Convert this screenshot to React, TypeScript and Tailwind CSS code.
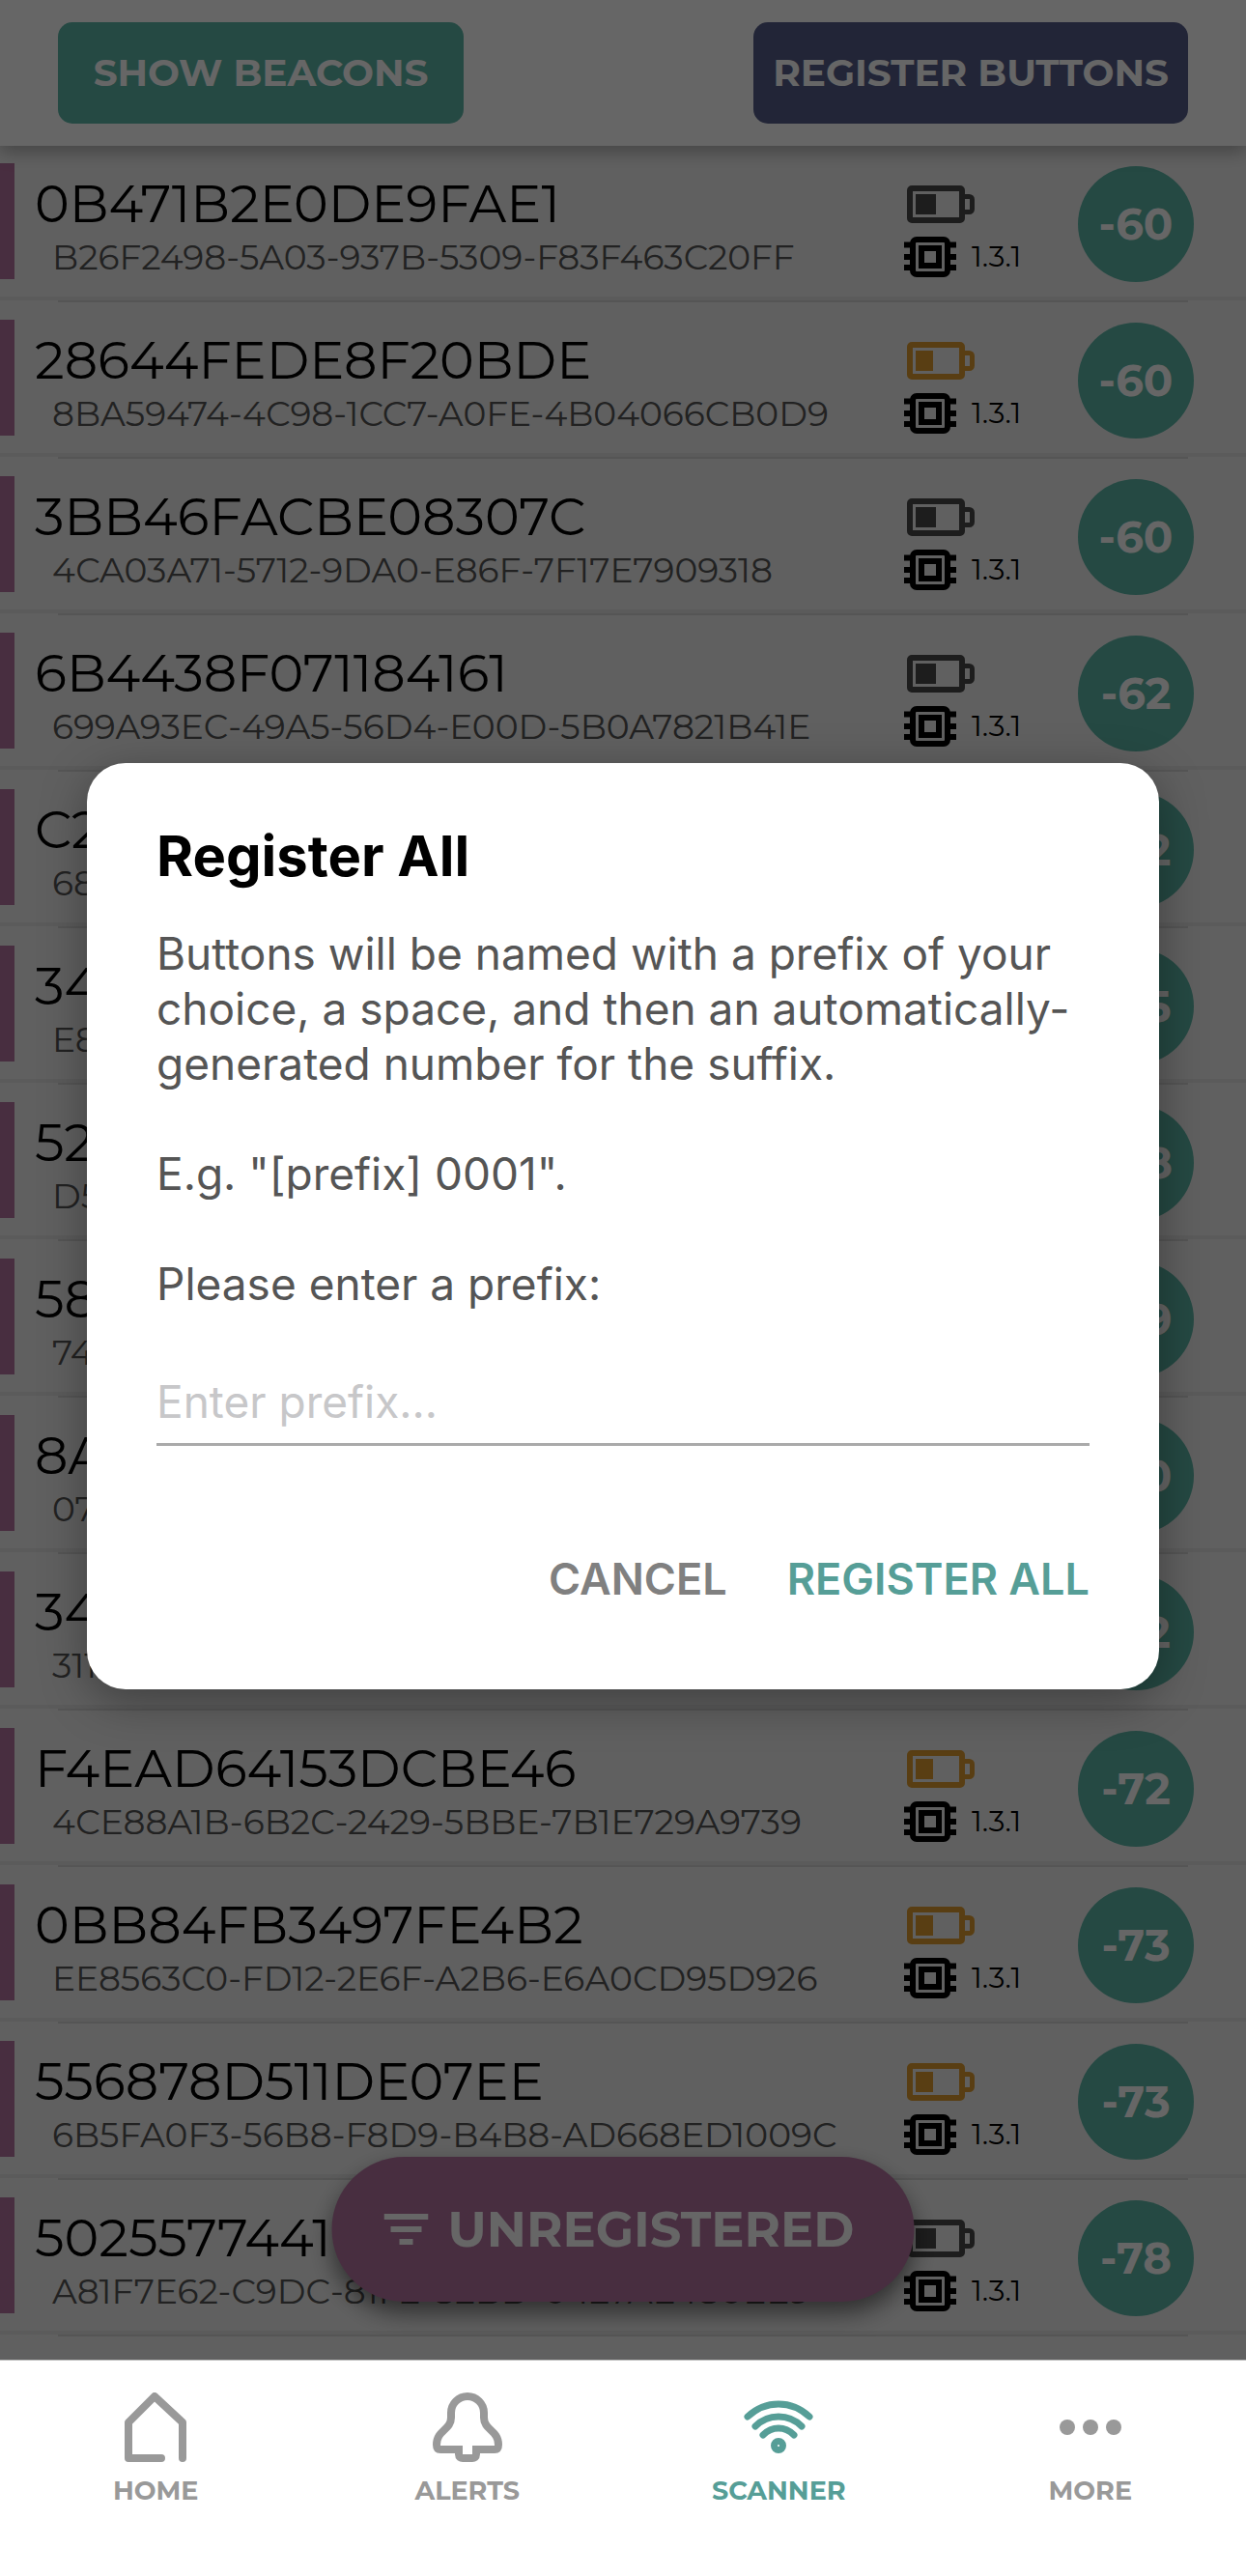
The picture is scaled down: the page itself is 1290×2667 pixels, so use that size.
import React, { useState } from 'react';

interface Beacon {
  id: string;
  uuid: string;
  rssi: number;
  battery: 'ok' | 'low';
  firmware: string;
}

const beacons: Beacon[] = [
  { id: '0B471B2E0DE9FAE1', uuid: 'B26F2498-5A03-937B-5309-F83F463C20FF', rssi: -60, battery: 'ok', firmware: '1.3.1' },
  { id: '28644FEDE8F20BDE', uuid: '8BA59474-4C98-1CC7-A0FE-4B04066CB0D9', rssi: -60, battery: 'low', firmware: '1.3.1' },
  { id: '3BB46FACBE08307C', uuid: '4CA03A71-5712-9DA0-E86F-7F17E7909318', rssi: -60, battery: 'ok', firmware: '1.3.1' },
  { id: '6B4438F071184161', uuid: '699A93EC-49A5-56D4-E00D-5B0A7821B41E', rssi: -62, battery: 'ok', firmware: '1.3.1' },
  { id: 'C2', uuid: '68', rssi: -62, battery: 'ok', firmware: '1.3.1' },
  { id: '34', uuid: 'E8', rssi: -65, battery: 'ok', firmware: '1.3.1' },
  { id: '52', uuid: 'D5', rssi: -68, battery: 'ok', firmware: '1.3.1' },
  { id: '58', uuid: '74', rssi: -69, battery: 'ok', firmware: '1.3.1' },
  { id: '8A', uuid: '07', rssi: -70, battery: 'ok', firmware: '1.3.1' },
  { id: '34', uuid: '311', rssi: -72, battery: 'ok', firmware: '1.3.1' },
  { id: 'F4EAD64153DCBE46', uuid: '4CE88A1B-6B2C-2429-5BBE-7B1E729A9739', rssi: -72, battery: 'low', firmware: '1.3.1' },
  { id: '0BB84FB3497FE4B2', uuid: 'EE8563C0-FD12-2E6F-A2B6-E6A0CD95D926', rssi: -73, battery: 'low', firmware: '1.3.1' },
  { id: '556878D511DE07EE', uuid: '6B5FA0F3-56B8-F8D9-B4B8-AD668ED1009C', rssi: -73, battery: 'low', firmware: '1.3.1' },
  { id: '5025577441', uuid: 'A81F7E62-C9DC-81F2-82BD-0427AE480EE9', rssi: -78, battery: 'ok', firmware: '1.3.1' },
];

const BatteryIcon: React.FC<{ level: 'ok' | 'low' }> = ({ level }) => (
  <svg
    viewBox="0 0 72 40"
    className={level === 'low' ? 'h-10 w-[72px] text-[#df9c30]' : 'h-10 w-[72px] text-[#4a4a4a]'}
    fill="none"
    stroke="currentColor"
    strokeWidth="6"
    aria-hidden="true"
  >
    <rect x="3" y="4" width="54" height="33" rx="2" />
    <path d="M60 12.500h4.500a3 3 0 0 1 3 3v10a3 3 0 0 1-3 3H60" strokeWidth="5" />
    <rect x="9" y="10" width={level === 'low' ? 18 : 21} height="21" fill="currentColor" stroke="none" />
  </svg>
);

const ChipIcon = () => (
  <svg viewBox="0 0 54 42" className="h-[42px] w-[54px] text-black" fill="none" stroke="currentColor" aria-hidden="true">
    <rect x="9" y="3" width="36" height="36" rx="4" strokeWidth="6" />
    <rect x="18" y="12" width="18" height="18" strokeWidth="6" />
    <path d="M0 8.500h7M0 21h7M0 32h7M47 8.500h7M47 21h7M47 32h7" strokeWidth="6" />
  </svg>
);

const FilterIcon = () => (
  <svg viewBox="0 0 46 32" className="h-8 w-[46px]" fill="currentColor" aria-hidden="true">
    <rect width="46" height="6" />
    <rect x="7" y="13" width="32" height="6" />
    <rect x="16" y="26" width="14" height="6" />
  </svg>
);

const HomeIcon = () => (
  <svg viewBox="0 0 72 72" className="h-[72px] w-[72px]" fill="none" stroke="currentColor" strokeWidth="8" strokeLinecap="round" strokeLinejoin="round" aria-hidden="true">
    <path d="M42 68H8V31L35 4l29 27v37" />
  </svg>
);

const BellIcon = () => (
  <svg viewBox="0 0 72 72" className="h-[72px] w-[72px]" fill="none" stroke="currentColor" strokeWidth="8" strokeLinejoin="round" aria-hidden="true">
    <path d="M27 59H8c-3 0-4-2-4-5 0-15 15-15 15-28v-5a17 17 0 0 1 34 0v5c0 13 15 13 15 28 0 3-1 5-4 5H45" />
    <path d="M27 55v9c0 3 2 4 4 4h10c2 0 4-1 4-4v-9" />
  </svg>
);

const ScannerIcon = () => (
  <svg viewBox="0 0 72 72" className="h-[72px] w-[72px]" fill="none" stroke="currentColor" strokeWidth="7" strokeLinecap="round" aria-hidden="true">
    <path d="M4 25Q18 12 36 12t32 13" />
    <path d="M12 35q10-10 24-10t24 10" />
    <path d="M20 44q7-7 16-7t16 7" />
    <circle cx="36" cy="55" r="4.500" />
  </svg>
);

const MoreIcon = () => (
  <svg viewBox="0 0 72 72" className="h-[72px] w-[72px]" fill="currentColor" aria-hidden="true">
    <circle cx="12" cy="36" r="8" />
    <circle cx="36" cy="36" r="8" />
    <circle cx="60" cy="36" r="8" />
  </svg>
);

const tabs = [
  { label: 'HOME', Icon: HomeIcon },
  { label: 'ALERTS', Icon: BellIcon },
  { label: 'SCANNER', Icon: ScannerIcon },
  { label: 'MORE', Icon: MoreIcon },
];

const BeaconRow: React.FC<{ beacon: Beacon }> = ({ beacon }) => (
  <li>
    <div className="flex h-[160px] items-start border-b-4 border-[#e4e4e4] pt-[18px] pr-[54px]">
      <div className="h-[120px] w-[15px] shrink-0 bg-[#b473a0]" />
      <div className="min-w-0 flex-1 pt-[10px] pl-[21px]">
        <p className="text-[54px] leading-[64px] text-black">{beacon.id}</p>
        <p className="pl-[18px] text-[36px] leading-[46px] text-[#555]">{beacon.uuid}</p>
      </div>
      <div className="flex w-[180px] shrink-0 flex-col gap-[14px] pt-[22px]">
        <div className="pl-[3px]">
          <BatteryIcon level={beacon.battery} />
        </div>
        <div className="flex items-center gap-4">
          <ChipIcon />
          <span className="text-[30px] leading-[42px] text-black">{beacon.firmware}</span>
        </div>
      </div>
      <div className="mt-[3px] flex h-[120px] w-[120px] shrink-0 items-center justify-center rounded-full bg-[#5cb6a7] text-[45px] font-bold text-white">
        {beacon.rssi}
      </div>
    </div>
    <div className="mx-[60px] h-[2px] bg-[#d4d4d4]" />
  </li>
);

const RegisterDialog = () => {
  const [prefix, setPrefix] = useState('');

  return (
    <div className="absolute inset-0 flex items-center bg-black/60 px-[90px] pt-[96px] font-['Inter',sans-serif]">
      <div role="dialog" aria-labelledby="dialog-title" className="w-full rounded-[40px] bg-white px-[72px] pt-[60px] pb-[78px] shadow-[0_12px_48px_rgba(0,0,0,0.35)]">
        <h2 id="dialog-title" className="text-[58px] leading-[72px] font-bold text-black">Register All</h2>
        <div className="mt-[37px] text-[46px] leading-[57px] text-[#555]">
          <p>Buttons will be named with a prefix of your choice, a space, and then an automatically-generated number for the suffix.</p>
          <p className="mt-[57px]">E.g. "[prefix] 0001".</p>
          <label htmlFor="prefix" className="mt-[57px] block">Please enter a prefix:</label>
        </div>
        <input
          id="prefix"
          value={prefix}
          onChange={(e) => setPrefix(e.target.value)}
          placeholder="Enter prefix..."
          className="mt-[49px] block h-[90px] w-full border-b-[3px] border-[#aaa] text-[46px] text-black outline-none placeholder:text-[#c7c7c9]"
        />
        <div className="mt-[102px] flex justify-end gap-[62px] text-[45px] leading-[72px] font-semibold">
          <button className="text-[#808080]">CANCEL</button>
          <button className="text-[#569e97]">REGISTER ALL</button>
        </div>
      </div>
    </div>
  );
};

const App = () => (
  <div className="flex min-h-screen flex-col bg-white font-['Montserrat','Inter',sans-serif]">
    <main className="relative flex-1 overflow-hidden bg-[#f1f1f1]">
      <header className="relative flex justify-between bg-white px-[60px] py-[23px] text-[39px] font-bold text-white shadow-[0_6px_18px_rgba(0,0,0,0.3)]">
        <button className="h-[105px] w-[420px] rounded-[15px] bg-[#5cb6a7]">SHOW BEACONS</button>
        <button className="h-[105px] w-[450px] rounded-[15px] bg-[#555d8a]">REGISTER BUTTONS</button>
      </header>

      <ul className="pb-6">
        {beacons.map((beacon, i) => (
          <BeaconRow key={i} beacon={beacon} />
        ))}
      </ul>

      <button className="absolute bottom-[60px] left-1/2 flex h-[150px] w-[603px] -translate-x-1/2 items-center justify-center gap-5 rounded-full bg-[#b473a0] pr-2 text-[51px] font-bold text-white shadow-[0_12px_24px_rgba(0,0,0,0.5)]">
        <FilterIcon />
        UNREGISTERED
      </button>

      <RegisterDialog />
    </main>

    <nav className="grid h-[224px] grid-cols-4 border-t border-[#bbb] pt-[33px]">
      {tabs.map(({ label, Icon }) => (
        <a
          key={label}
          href="#"
          className={
            label === 'SCANNER'
              ? 'flex flex-col items-center gap-3 text-[27px] leading-9 font-bold text-[#569e97]'
              : 'flex flex-col items-center gap-3 text-[27px] leading-9 font-bold text-[#999]'
          }
        >
          <Icon />
          {label}
        </a>
      ))}
    </nav>
  </div>
);

export default App;
